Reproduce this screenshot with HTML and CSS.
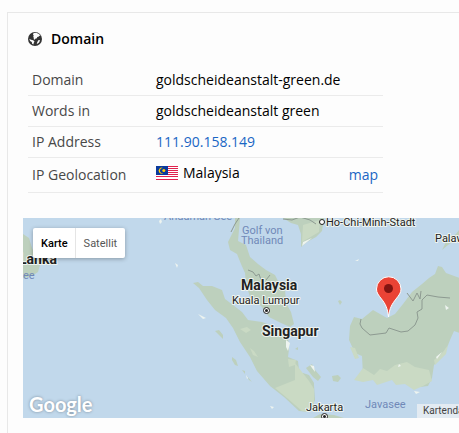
FILE: index.html
```html
<!DOCTYPE html>
<html lang="en">
<head>
    <meta charset="utf-8">
    <title>Domain</title>
    <link rel="stylesheet" href="styles.css">
</head>

<body>
    <div class="panel">
        <h2 class="panel-title">
            <svg class="icon-globe" viewBox="0 0 14 14" width="14" height="14" aria-hidden="true">
                <circle cx="7" cy="7" r="7" fill="#333"/>
                <path fill="#fdfdfd" d="M5.6.9 8.2.8 11 2l1.6 2-1.3-.2-.8 1-1.3.3-.2 1.2-1.3.3-1.2 1.2-.9-.8.5-1.5-1.2-.3.9-1.5-.8-1zM1.3 6.8l1.7.9 2.2.5 1.3 1.4-.8 1.3-.3 1.7-1.3-.8-.3-1.9-1.7-1zM10.2 8.3l1.8-.4-.7 2.3-1.6 1.6-1-.3z"/>
            </svg>
            Domain
        </h2>

        <table class="info">
            <tr>
                <th scope="row">Domain</th>
                <td colspan="2">goldscheideanstalt-green.de</td>
            </tr>
            <tr>
                <th scope="row">Words in</th>
                <td colspan="2">goldscheideanstalt green</td>
            </tr>
            <tr>
                <th scope="row">IP Address</th>
                <td colspan="2"><a href="#ip">111.90.158.149</a></td>
            </tr>
            <tr class="geo">
                <th scope="row">IP Geolocation</th>
                <td>
                    <span class="country">
                        <svg class="flag" viewBox="0 0 22 14" width="22" height="14" aria-hidden="true">
                            <rect width="22" height="14" fill="#fff"/>
                            <path stroke="#e0224e" d="M0 .5h22M0 2.5h22M0 4.5h22M0 6.5h22M0 8.5h22M0 10.5h22M0 13.5h22"/>
                            <rect width="12" height="9" fill="#0a3a9c"/>
                            <path fill="#fc0" d="M7.3 2.2A3 3 0 1 0 7.3 7.2 2.6 2.6 0 1 1 7.3 2.2z"/>
                            <circle cx="7.8" cy="4.6" r="1.5" fill="#fc0"/>
                        </svg>
                        Malaysia
                    </span>
                </td>
                <td class="more"><a href="#map">map</a></td>
            </tr>
        </table>

        <div class="map" id="map">
            <svg class="map-tiles" viewBox="23 218 600 200" width="600" height="200">
                <!-- land -->
                <g fill="#bdd0bd">
                    <path d="M23 234 29 238 32 248 36 257 40 265 38 272 32 276 23 278z"/>
                    <path d="M235 218h5l-1 12-1 11 8 4 4 12 8 7 8 6 9 5 4 8 6 6 1 14 5 9 3 12-4 3-9-4-12-6-8-11-11-9-4-13-1-11-4-9-4-10-7-4-2-8 4-8 3-6z"/>
                    <path d="m193 283 5-1 5 4h9l10 4 3 9 8 6 9 7 6 8 14 2 11 4 8 7 7 4 1 12-1 8 10 4 1 9 6 6 9 9 1 15-5 12-11-1-15-14-14-11-13-15-7-14-10-15-7-14-7-10-11-8-8-10-8-12z"/>
                    <path d="m283 218 8 5 7 2 3 9v13l6-5 9-5 6-6 2-13z"/>
                    <path d="m387 318 8-4 8-10 9-12 10-8 7-6 6-4 3-8 4 1 4 6 14 5v55l-6-2-4 9-5 13-11 12-2 13-4 8-8 1-9-6-5-5-15 2-7 3-6-6-5 1-10-1-1-19-7-3-6-13 1-14 4-9 8 2 11-9z"/>
                    <path d="m306 368 6-4 3 6 6 7-3 4-5-4zM332 376l6-1 3 3-3 4-5-1zM303 373l6 2 5 8v10l-6 9h-5zM313 418l7-4 14 1 10 3z"/>
                    <path d="m215 331 4-1 4 5v4zM232 357l4 3 2 6-3-1-3-5zM242 370l3 1v3zM247 376l5 6-3-2zM295 349l3-2v3zM338 301l2-1 2 2-2 3zM442 250l4-8 10-8 3-4v8l-11 7z"/>
                </g>
                <!-- lowlands -->
                <g fill="#cadac4">
                    <path d="m275 388 20-8 0-17 7 9 7 9 5 8v14l-6 9-6-1-15-13z"/>
                    <path d="m240 329 7-2 4 3-5 3zM250 348l4 3 4 6-5-2zM288 359l8 1-1 5-6 2z"/>
                    <path d="m303 225 17-5-1 12-17 10zM363 368l11 7 6-6 7 2 8-6 12-3 8 5 14 3 3 11-9 5-9 4-9-6-9 1-4-5-15 5-4-5-10 2-9-2z"/>
                    <path d="m350 347 5 1 4 10-4 1zM434 360l9-8 5-7-2 9-11 11z"/>
                </g>
                <!-- surf and reefs -->
                <path fill="#eef4f0" d="m303 242 9-4-10 8zM310 365l4 1 1 6-3-4zM198 314l8 4-3 1zM161 219l1 3-2 2-1-3zM175 263l3 2-1 3zM355 261l4-2-1 2zM270 406l4 1-2 2zM445 305l4 3-3 2zM286 340l4 3-2 8-2-4zM399 364l2 2-3 1zM414 391l6 1-4 2zM436 357l6-5-5 7zM246 375l2 3-1 1z"/>
                <!-- borders -->
                <path fill="none" stroke="#8d9a91" d="m239 218-4 6-4 8M248 270l5 2 3 4 3-2 2 6M266 280l4-5M283 219l9 1 8-3 10 3 6 4M407 293l6 8 4-8 3 6 1-8M450 298l-12-1-11-2-5 5v9l-5 3 1 6-3 7-7 6-7 1-12-4-3 5-16 2-8-7-2-4 1-5"/>

                <!-- place names -->
                <g class="sea">
                    <text x="164" y="220">Andaman See</text>
                    <text x="242" y="234">Golf von</text>
                    <text x="241" y="244">Thailand</text>
                    <text x="365" y="408">Javasee</text>
                    <text x="23" y="279">ee</text>
                </g>
                <g class="country-name">
                    <text x="19" y="264">Lanka</text>
                    <text x="241" y="290">Malaysia</text>
                    <text x="262" y="336">Singapur</text>
                </g>
                <g class="city">
                    <text x="232" y="304">Kuala Lumpur</text>
                    <text x="326" y="226">Ho-Chi-Minh-Stadt</text>
                    <text x="306" y="411">Jakarta</text>
                    <text x="435" y="242">Palawan</text>
                </g>
                <g fill="#fff" stroke="#222">
                    <circle cx="266.5" cy="310.5" r="3"/>
                    <circle cx="324.5" cy="416.5" r="3"/>
                    <circle cx="322" cy="222" r="2.5"/>
                </g>
                <g fill="#222">
                    <circle cx="266.5" cy="310.5" r="1.5"/>
                    <circle cx="324.5" cy="416.5" r="1.5"/>
                </g>

                <!-- marker -->
                <path fill="#ea4335" stroke="#fff" d="M388.5 317c-1-9-3-13-7-18-3-4-5-6-5-10a12.2 12.2 0 0 1 24.5 0c0 4-2 6-5 10-4 5-6.5 9-7.5 18z"/>
                <circle cx="388.5" cy="288.5" r="4.5" fill="#811411"/>
            </svg>

            <div class="map-type">
                <button type="button" class="active">Karte</button>
                <button type="button">Satellit</button>
            </div>
            <a class="map-logo" href="#google">Google</a>
            <div class="map-copyright">Kartendaten</div>
        </div>
    </div>
</body>
</html>
```
FILE: styles.css
```css
body {
    font-family: "Open Sans", "Noto Sans", sans-serif;
    font-size: 14px;
    line-height: 20px;
    margin: 0;
    padding: 12px 0 0 7px;
    background-color: #fdfdfd;
    color: #000;
}

a {
    color: #1a66c4;
    text-decoration: none;
}

/* Panel */
.panel {
    box-sizing: border-box;
    min-height: calc(100vh - 12px);
    padding: 16px 0 0 15px;
    border-top: 1px solid #e8e8e8;
    border-left: 1px solid #e8e8e8;
}

.panel-title {
    display: flex;
    align-items: center;
    gap: 9px;
    margin: 0 0 16px 5px;
    font-size: 14px;
    font-weight: 600;
}

/* Info table */
.info {
    width: calc(100% - 5px);
    max-width: 355px;
    margin-left: 5px;
    border-collapse: collapse;
}

.info th, .info td {
    height: 20px;
    padding: 5px;
    text-align: left;
    border-bottom: 1px solid #ebebeb;
}

.info th {
    width: 114px;
    padding-left: 4px;
    color: #484848;
    font-weight: normal;
}

.info .geo th, .info .geo td {
    height: 24px;
}

.info .geo td.more {
    text-align: right;
}

.country {
    display: flex;
    align-items: center;
    gap: 5px;
    padding-bottom: 4px;
}

/* Map */
.map {
    position: relative;
    height: 200px;
    margin-top: 25px;
    overflow: hidden;
    background-color: #c1d8eb;
    font-family: Roboto, sans-serif;
}

.map-tiles {
    display: block;
}

.map-tiles text {
    paint-order: stroke;
    stroke-linejoin: round;
}

.sea {
    font-size: 11px;
    fill: #7088b8;
}

.country-name {
    font-size: 14px;
    font-weight: bold;
    fill: #222;
    stroke: #eef4f0;
    stroke-width: 2px;
}

.city {
    font-size: 11px;
    fill: #222;
    stroke: #eef4f0;
    stroke-width: 2px;
}

.map-type {
    position: absolute;
    top: 10px;
    left: 10px;
    display: flex;
    border-radius: 2px;
    background-color: #fff;
    box-shadow: 0 1px 4px rgba(0, 0, 0, 0.3);
}

.map-type button {
    height: 30px;
    padding: 0 8px;
    border: none;
    background: none;
    color: #565656;
    font-family: Roboto, sans-serif;
    font-size: 11px;
    cursor: pointer;
}

.map-type button.active {
    padding-right: 7px;
    border-right: 1px solid #e5e5e5;
    color: #000;
    font-weight: 500;
}

.map-logo {
    position: absolute;
    bottom: 2px;
    left: 6px;
    color: #fff;
    font-family: Lato, sans-serif;
    font-size: 20px;
    font-weight: bold;
    line-height: 24px;
    text-shadow: 0 0 3px #7a8a98;
}

.map-copyright {
    position: absolute;
    right: 0;
    bottom: 0;
    box-sizing: border-box;
    width: 42px;
    padding-left: 6px;
    overflow: hidden;
    background-color: #e3ebf2;
    color: #444;
    font-size: 10px;
    line-height: 14px;
    white-space: nowrap;
}
```
